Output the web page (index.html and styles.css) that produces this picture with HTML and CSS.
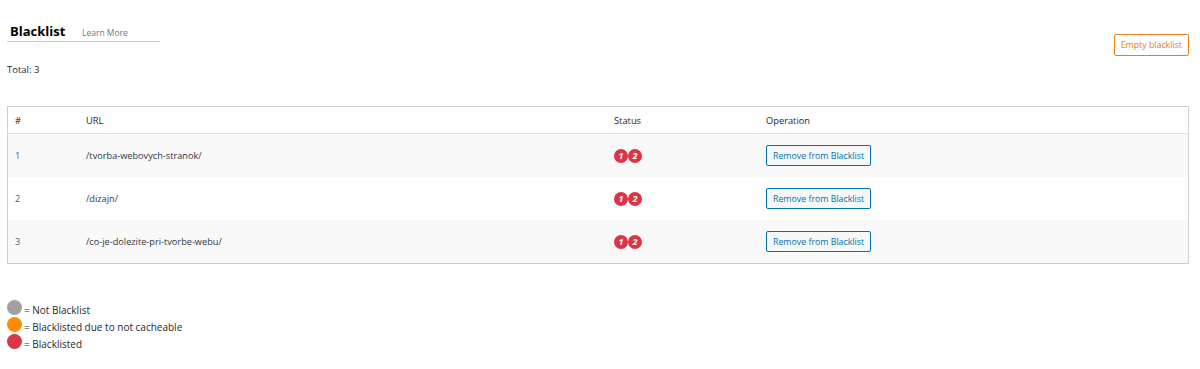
FILE: index.html
```html
<!DOCTYPE html>
<html lang="en">
<head>
    <meta charset="UTF-8">
    <title>Blacklist</title>
    <link rel="stylesheet" href="styles.css">
</head>
<body>
    <div class="wrap">
        <div class="top-bar">
            <div class="heading">
                <h3 class="title">Blacklist</h3>
                <a href="#" class="learn-more">Learn More</a>
            </div>
            <button class="btn-empty">Empty blacklist</button>
        </div>

        <p class="total">Total: 3</p>

        <table class="list">
            <thead>
                <tr>
                    <th class="col-num">#</th>
                    <th class="col-url">URL</th>
                    <th class="col-status">Status</th>
                    <th>Operation</th>
                </tr>
            </thead>
            <tbody>
                <tr class="alt">
                    <td class="num">1</td>
                    <td>/tvorba-webovych-stranok/</td>
                    <td><span class="badge">1</span><span class="badge">2</span></td>
                    <td><button class="btn-remove">Remove from Blacklist</button></td>
                </tr>
                <tr>
                    <td class="num">2</td>
                    <td>/dizajn/</td>
                    <td><span class="badge">1</span><span class="badge">2</span></td>
                    <td><button class="btn-remove">Remove from Blacklist</button></td>
                </tr>
                <tr class="alt">
                    <td class="num">3</td>
                    <td>/co-je-dolezite-pri-tvorbe-webu/</td>
                    <td><span class="badge">1</span><span class="badge">2</span></td>
                    <td><button class="btn-remove">Remove from Blacklist</button></td>
                </tr>
            </tbody>
        </table>

        <div class="legend">
            <div class="legend-item"><span class="dot dot-grey"></span>= Not Blacklist</div>
            <div class="legend-item"><span class="dot dot-orange"></span>= Blacklisted due to not cacheable</div>
            <div class="legend-item"><span class="dot dot-red"></span>= Blacklisted</div>
        </div>
    </div>
</body>
</html>
```

FILE: styles.css
```css
body {
    font-family: 'Open Sans', 'Noto Sans', sans-serif;
    font-size: 9.5px;
    color: #23282d;
    background-color: #fff;
    margin: 0;
    padding: 0;
}

.wrap {
    padding: 24px 11px 0 7px;
}

.top-bar {
    display: flex;
    justify-content: space-between;
    align-items: flex-start;
}

.heading {
    display: flex;
    align-items: baseline;
    width: 153px;
    border-bottom: 1px solid #ccc;
    padding: 0 0 1px 3px;
    box-sizing: border-box;
    line-height: 15px;
}

.title {
    margin: 0;
    font-size: 13px;
    font-weight: 700;
    color: #000;
    width: 72px;
}

.learn-more {
    color: #72777c;
    font-size: 8.5px;
    text-decoration: none;
}

.btn-empty {
    margin-top: 10px;
    height: 22px;
    padding: 0 6px;
    font-family: inherit;
    font-size: 8.8px;
    color: #e67e22;
    background: #fff;
    border: 1px solid #e67e22;
    border-radius: 2px;
}

.total {
    margin: 7px 0 0;
    line-height: 14px;
}

.list {
    width: 100%;
    margin-top: 29px;
    border-collapse: collapse;
    border: 1px solid #ccd0d4;
}

.list th {
    text-align: left;
    font-weight: 400;
    font-size: 9.3px;
    height: 26px;
    padding: 0 7px;
    border-bottom: 1px solid #e1e1e1;
}

.list td {
    height: 43px;
    padding: 0 7px;
    font-size: 9.2px;
    color: #32373c;
}

.list td.num {
    color: #555d66;
}

.col-num { width: 57px; }
.col-url { width: 514px; }
.col-status { width: 138px; }

.list tr.alt td {
    background-color: #f9f9f9;
}

.badge {
    display: inline-block;
    width: 14px;
    height: 14px;
    line-height: 14px;
    border-radius: 50%;
    background-color: #dc3545;
    color: #fff;
    font-size: 9px;
    font-style: italic;
    font-weight: 700;
    text-align: center;
    vertical-align: middle;
}

.btn-remove {
    height: 21px;
    padding: 0 6px;
    font-family: inherit;
    font-size: 8.8px;
    color: #0073aa;
    background: #f7f7f7;
    border: 1px solid #0073aa;
    border-radius: 2px;
}

.legend {
    margin-top: 36px;
    font-size: 10px;
}

.legend-item {
    display: flex;
    align-items: flex-end;
    height: 17px;
    line-height: 14px;
}

.dot {
    display: inline-block;
    width: 15px;
    height: 15px;
    border-radius: 50%;
    margin: 0 2px 2px 0;
}

.dot-grey { background-color: #a0a0a0; }
.dot-orange { background-color: #ff8c00; }
.dot-red { background-color: #dc3545; }
```
